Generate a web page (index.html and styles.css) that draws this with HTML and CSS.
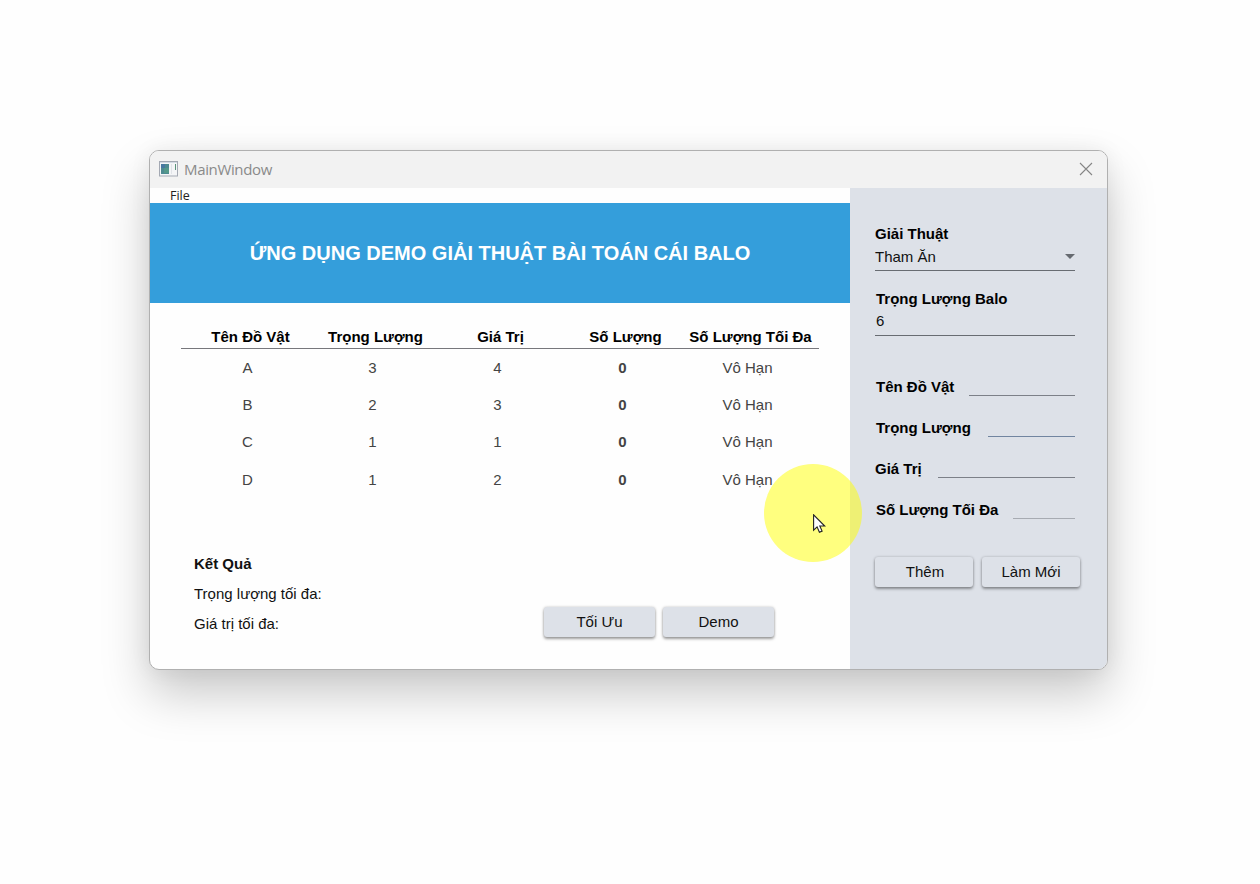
FILE: index.html
```html
<!DOCTYPE html>
<html lang="vi">
<head>
<meta charset="utf-8">
<title>MainWindow</title>
<link rel="stylesheet" href="styles.css">
</head>
<body>
<div class="window">
  <header class="titlebar">
    <svg class="app-icon" width="20" height="16" viewBox="0 0 20 16">
      <rect x=".5" y=".5" width="18" height="14.500" fill="#f4f5f7" stroke="#a4a9b3"/>
      <path d="M1 1.500h17" stroke="#d4dbe4"/>
      <rect x="2" y="3" width="8" height="10" fill="#4d8a91"/>
      <path d="M2 3h4v4H2z" fill="#4778a0"/><path d="M5 7h5v5H5z" fill="#53988a"/>
      <path d="M12.500 3v10" stroke="#e0e3e8"/>
      <path d="M16.500 3v6" stroke="#5b947b"/>
    </svg>
    <span class="title">MainWindow</span>
    <svg class="close" width="14" height="14" viewBox="0 0 14 14"><path d="M1 1l12 12M13 1L1 13" stroke="#858585" stroke-width="1.100"/></svg>
  </header>
  <div class="content">
    <main class="main">
      <nav class="menu"><span>File</span></nav>
      <div class="banner"><h1>ỨNG DỤNG DEMO GIẢI THUẬT BÀI TOÁN CÁI BALO</h1></div>
      <div class="table">
        <div class="thead"><span>Tên Đồ Vật</span><span>Trọng Lượng</span><span>Giá Trị</span><span>Số Lượng</span><span>Số Lượng Tối Đa</span></div>
        <div class="row"><span>A</span><span>3</span><span>4</span><b>0</b><span>Vô Hạn</span></div>
        <div class="row"><span>B</span><span>2</span><span>3</span><b>0</b><span>Vô Hạn</span></div>
        <div class="row last-pair"><span>C</span><span>1</span><span>1</span><b>0</b><span>Vô Hạn</span></div>
        <div class="row"><span>D</span><span>1</span><span>2</span><b>0</b><span>Vô Hạn</span></div>
      </div>
      <div class="bottom">
        <div class="result"><strong>Kết Quả</strong><span>Trọng lượng tối đa:</span><span>Giá trị tối đa:</span></div>
        <div class="actions"><button class="btn">Tối Ưu</button><button class="btn">Demo</button></div>
      </div>
    </main>
    <aside class="side">
      <div class="field algorithm">
        <label>Giải Thuật</label>
        <div class="value"><span>Tham Ăn</span><svg width="10" height="5" viewBox="0 0 10 5"><path d="M0 0h10L5 5z" fill="#666a70"/></svg></div>
      </div>
      <div class="field capacity">
        <label>Trọng Lượng Balo</label>
        <div class="value"><span>6</span></div>
      </div>
      <div class="form">
        <div class="line"><label>Tên Đồ Vật</label><i class="input name"></i></div>
        <div class="line"><label>Trọng Lượng</label><i class="input weight"></i></div>
        <div class="line"><label>Giá Trị</label><i class="input price"></i></div>
        <div class="line"><label>Số Lượng Tối Đa</label><i class="input limit"></i></div>
      </div>
      <div class="side-actions"><button class="btn">Thêm</button><button class="btn">Làm Mới</button></div>
    </aside>
  </div>
</div>
<div class="highlight"></div>
<svg class="cursor" width="13" height="20" viewBox="0 0 13 20"><path d="M.6.800v15.400l3.500-3.300 2.300 5.300 2.700-1.100-2.300-5.100h4.900z" fill="#fff" stroke="#222" stroke-width="1.100"/></svg>
</body>
</html>
```

FILE: styles.css
```css
* { box-sizing: border-box; }
body {
  margin: 0;
  width: 1260px;
  height: 884px;
  padding: 150px 0 0 149px;
  overflow: hidden;
  background: #fefefe;
  font-family: "Liberation Sans", Arial, sans-serif;
  font-size: 15px;
  line-height: 20px;
  color: #111;
}
.window {
  width: 959px;
  height: 520px;
  border: 1px solid #b0b0b0;
  border-radius: 10px;
  overflow: hidden;
  background: #fefefe;
  box-shadow: 0 24px 48px rgba(0, 0, 0, .21), 0 0 22px rgba(0, 0, 0, .06);
}
.titlebar {
  height: 37px;
  display: flex;
  align-items: center;
  padding: 0 14px 2px 9px;
  background: #f2f2f2;
  color: #8a8a8a;
  font-family: "Open Sans", "Noto Sans", sans-serif;
}
.title { margin-left: 5px; letter-spacing: -.35px; }
.close { margin-left: auto; }
.content { display: flex; height: 481px; }
.main { width: 700px; }
.menu {
  height: 15px;
  padding-left: 20px;
  font: 12.500px/15px "Open Sans", "Noto Sans", sans-serif;
  color: #222;
}
.banner {
  height: 100px;
  display: flex;
  align-items: center;
  justify-content: center;
  background: #349edb;
}
.banner h1 { margin: 0; font-size: 20px; line-height: 24px; color: #fff; white-space: nowrap; }
.table { margin: 20px 31px 0; width: 638px; }
.thead, .row { display: grid; grid-template-columns: repeat(5, 125px); text-align: center; }
.thead {
  height: 26px;
  padding: 4px 0 0 7px;
  border-bottom: 1px solid #77777c;
  font-weight: bold;
  color: #000;
  white-space: nowrap;
}
.row { height: 37px; padding: 9px 0 0 4px; color: #444; }
.row.last-pair { height: 38px; }
.bottom { display: flex; justify-content: space-between; padding: 56px 76px 0 44px; }
.result { display: flex; flex-direction: column; gap: 10px; }
.actions { display: flex; gap: 8px; padding-top: 53px; }
.btn {
  width: 111px;
  height: 30px;
  padding: 0;
  border: 0;
  border-radius: 3px;
  background: #dde1e8;
  box-shadow: 0 2px 3px rgba(0, 0, 0, .36), 0 0 3px rgba(0, 0, 0, .2);
  font: 15px/20px "Liberation Sans", Arial, sans-serif;
  color: #111;
}
.side { width: 257px; padding: 35px 26px 0 25px; background: #dde1e8; }
.side label { font-weight: bold; color: #000; white-space: nowrap; }
.field { width: 200px; border-bottom: 1px solid #686c72; }
.field label { display: block; }
.algorithm { height: 48px; padding-top: 1px; }
.capacity { height: 48px; margin-top: 17px; padding: 1px 0 0 1px; }
.value { display: flex; align-items: center; justify-content: space-between; margin-top: 3px; }
.value svg { margin-bottom: 1px; }
.capacity .value { margin-top: 2px; }
.form { margin-top: 41px; }
.line { display: flex; justify-content: space-between; width: 200px; height: 41px; padding-left: 1px; }
.line:nth-child(3) { padding-left: 0; }
.input { height: 19px; border-bottom: 1px solid #7c8088; }
.name { width: 106px; }
.weight { width: 87px; border-color: #7185a0; }
.price { width: 137px; }
.limit { width: 62px; border-color: #a7abb2; }
.side-actions { display: flex; gap: 9px; margin-top: 16px; }
.side-actions .btn { width: 98px; flex: none; }
.side-actions .btn:first-child { padding-left: 2px; }
.highlight {
  position: absolute;
  left: 764px;
  top: 464px;
  width: 98px;
  height: 98px;
  border-radius: 50%;
  background: rgba(255, 255, 0, .5);
}
.cursor { position: absolute; left: 813px; top: 514px; }
```
